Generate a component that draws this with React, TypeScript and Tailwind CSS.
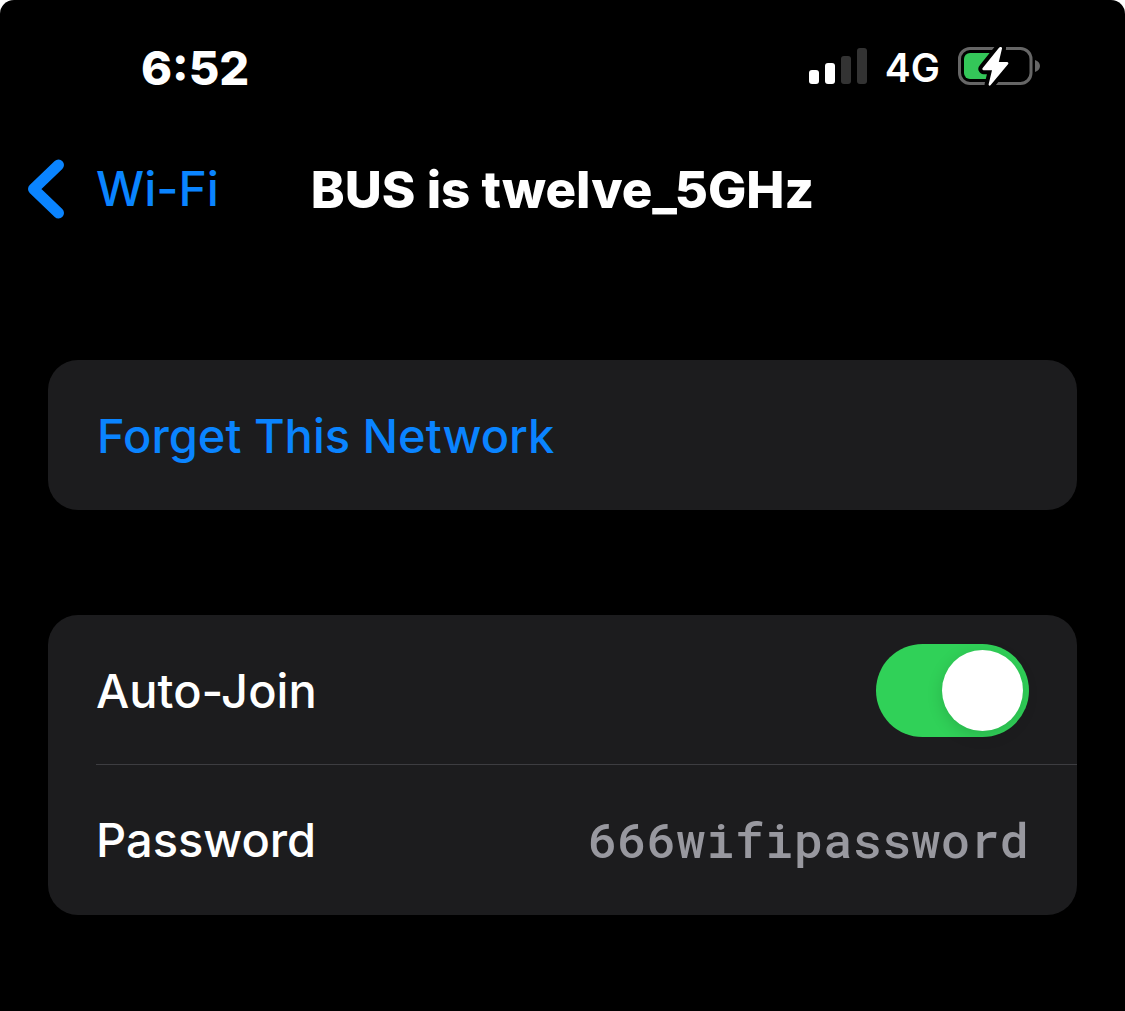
import { useState } from 'react';

const rowClass = 'flex h-[150px] items-center justify-between pr-12';

function SignalBars() {
  return (
    <svg viewBox="0 0 58 38" className="h-[38px] w-[58px]" aria-hidden="true">
      <rect x="0" y="22" width="10" height="14" rx="3" fill="#fff" />
      <rect x="16" y="15" width="10" height="21" rx="3" fill="#fff" />
      <rect x="32" y="8" width="10" height="28" rx="3" fill="#333" />
      <rect x="48" y="0" width="10" height="36" rx="3" fill="#333" />
    </svg>
  );
}

function Battery() {
  return (
    <svg viewBox="0 0 82 40" className="h-10 w-[82px]" aria-hidden="true">
      <rect x="1.5" y="1.5" width="71.5" height="35" rx="10.5" fill="none" stroke="#666" strokeWidth="3" />
      <path d="M77 13c3 1 5 3 5 6s-2 5-5 6z" fill="#666" />
      <path d="M12 6h24v26H12a6 6 0 0 1-6-6V12a6 6 0 0 1 6-6z" fill="#34c759" />
      <path
        d="M41 .7 24.700 21a1.300 1.300 0 0 0 1 2.200h8.300L30.700 37c-.4 1.600 1 2.200 2 1L50 17.200a1.300 1.300 0 0 0-1-2.200h-8.200L44 1.600C44.400.1 42-.5 41 .7z"
        fill="#fff"
        stroke="#000"
        strokeWidth="8"
        paintOrder="stroke"
        strokeLinejoin="round"
      />
    </svg>
  );
}

function StatusBar() {
  return (
    <div className="flex h-[134px] items-center justify-between pr-[85px] pl-[141px]">
      <span className="text-[47px] font-extrabold text-white">6:52</span>
      <div className="flex items-center gap-[18px]">
        <SignalBars />
        <span className="text-[39px] font-semibold text-white">4G</span>
        <Battery />
      </div>
    </div>
  );
}

export default function App() {
  const [autoJoin, setAutoJoin] = useState(true);

  return (
    <div className="min-h-screen bg-white font-['Inter',sans-serif] leading-none">
      <div className="min-h-screen overflow-hidden rounded-t-[14px] bg-black">
        <StatusBar />

        <header className="grid h-[110px] grid-cols-[1fr_auto_1fr] items-center px-7">
          <a href="#wifi" className="flex items-center gap-8 text-[48px] font-medium text-[#0a84ff]">
            <svg viewBox="0 0 36 60" className="h-[60px] w-9" fill="none" aria-hidden="true">
              <path d="M30.500 6 5.500 30l25 24" stroke="currentColor" strokeWidth="11" strokeLinecap="round" strokeLinejoin="round" />
            </svg>
            Wi-Fi
          </a>
          <h1 className="text-[51px] font-extrabold text-white">BUS is twelve_5GHz</h1>
        </header>

        <main className="flex flex-col gap-[105px] px-12 pt-[116px] text-[47px] font-medium">
          <section className="rounded-[30px] bg-[#1c1c1e]">
            <button type="button" className="flex h-[150px] w-full items-center pl-[49px] text-left text-[#0a84ff]">
              Forget This Network
            </button>
          </section>

          <section className="rounded-[30px] bg-[#1c1c1e] pl-12">
            <div className={`${rowClass} border-b border-[#3d3d41] pt-px`}>
              <label htmlFor="auto-join" className="text-white">
                Auto-Join
              </label>
              <input
                id="auto-join"
                type="checkbox"
                role="switch"
                checked={autoJoin}
                onChange={(e) => setAutoJoin(e.target.checked)}
                className="flex h-[93px] w-[153px] appearance-none items-center rounded-full bg-[#39393d] p-[6px] before:size-[81px] before:rounded-full before:bg-white before:shadow-[0_4px_16px_rgba(0,0,0,0.15)] checked:justify-end checked:bg-[#30d158]"
              />
            </div>
            <div className={`${rowClass} pb-0.5`}>
              <span className="text-white">Password</span>
              <span className="font-['Roboto_Mono','DejaVu_Sans_Mono',monospace] text-[49px] text-[#98989f]">
                666wifipassword
              </span>
            </div>
          </section>
        </main>
      </div>
    </div>
  );
}
